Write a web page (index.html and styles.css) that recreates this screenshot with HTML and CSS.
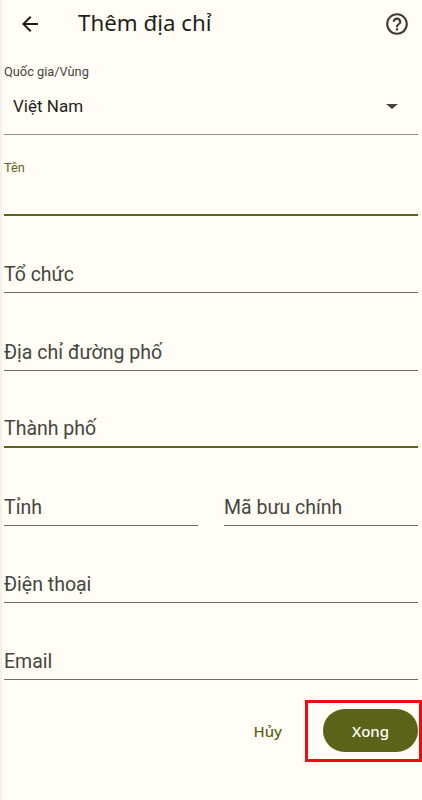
FILE: index.html
```html
<!DOCTYPE html>
<html lang="vi">
<head>
    <meta charset="utf-8" />
    <title>Thêm địa chỉ</title>
    <link rel="stylesheet" href="styles.css">
</head>
<body>
    <header class="top">
        <svg class="back" width="24" height="24" viewBox="0 0 24 24"><path d="M20 11H7.83l5.59-5.59L12 4l-8 8 8 8 1.41-1.41L7.83 13H20z" /></svg>
        <h1 class="title">Thêm địa chỉ</h1>
        <svg class="help" width="26" height="26" viewBox="0 0 24 24"><path d="M11 18h2v-2h-2v2zm1-16C6.48 2 2 6.48 2 12s4.48 10 10 10 10-4.48 10-10S17.52 2 12 2zm0 18c-4.41 0-8-3.59-8-8s3.59-8 8-8 8 3.59 8 8-3.59 8-8 8zm0-14c-2.21 0-4 1.79-4 4h2c0-1.1.9-2 2-2s2 .9 2 2c0 2-3 1.75-3 5h2c0-2.25 3-2.5 3-5 0-2.21-1.79-4-4-4z" /></svg>
    </header>
    <form class="form" action="#" method="get">
        <div class="country">
            <span class="small">Quốc gia/Vùng</span>
            <div class="select">
                <span>Việt Nam</span>
                <span class="caret"></span>
            </div>
        </div>
        <div class="field field-name active">
            <span class="small green">Tên</span>
        </div>
        <div class="field"><span class="ph">Tổ chức</span></div>
        <div class="field"><span class="ph">Địa chỉ đường phố</span></div>
        <div class="field active"><span class="ph">Thành phố</span></div>
        <div class="pair">
            <div class="field"><span class="ph">Tỉnh</span></div>
            <div class="field"><span class="ph">Mã bưu chính</span></div>
        </div>
        <div class="field"><span class="ph">Điện thoại</span></div>
        <div class="field"><span class="ph">Email</span></div>
        <div class="actions">
            <span class="cancel">Hủy</span>
            <span class="mark"><span class="done">Xong</span></span>
        </div>
    </form>
</body>
</html>
```

FILE: styles.css
```css
* {
    box-sizing: border-box;
    font-family: Roboto, "Noto Sans", sans-serif;
}

body {
    margin: 0;
    height: 800px;
    overflow: hidden;
    background: #fffdf6;
    box-shadow: inset 2px 0 #f1f0ea;
    color: #1f1f1a;
}

.top {
    display: flex;
    align-items: center;
    height: 48px;
    padding: 0 12px 0 18px;
}

.back {
    fill: #1c1c18;
}

.title {
    flex: 1;
    margin: 0 0 3px 36px;
    font-family: "Noto Sans", Roboto, sans-serif;
    font-size: 22.3px;
    font-weight: 400;
}

.help {
    fill: #3a3a36;
}

.form {
    padding: 0 4px;
}

.small {
    display: block;
    font-size: 12.8px;
    line-height: 16px;
    color: #45453f;
}

.green {
    color: #5a6318;
}

.country {
    height: 87px;
    padding-top: 16px;
    border-bottom: 1px solid #8c8c88;
}

.select {
    display: flex;
    align-items: center;
    justify-content: space-between;
    height: 24px;
    margin-top: 14px;
    padding: 0 20px 0 9px;
    font-size: 17px;
}

.caret {
    border: 6px solid transparent;
    border-top: 5px solid #45453f;
    border-bottom-width: 0;
}

.field {
    display: flex;
    align-items: flex-end;
    height: 77.4px;
    padding-bottom: 5px;
    border-bottom: 1px solid #6c6c64;
}

.field-name {
    display: block;
    height: 81px;
    padding-top: 25px;
}

.active {
    border-bottom: 2px solid #5a6318;
}

.ph {
    font-size: 19.5px;
    line-height: 24px;
    color: #45453f;
}

.pair {
    display: grid;
    grid-template-columns: 194px 194px;
    gap: 26px;
}

.actions {
    display: flex;
    align-items: center;
    justify-content: flex-end;
    margin-top: 20px;
    margin-right: -4px;
}

.cancel {
    margin-right: 23px;
    font-family: "Noto Sans", Roboto, sans-serif;
    font-size: 15px;
    font-weight: 500;
    color: #5a6318;
}

.mark {
    display: block;
    width: 117px;
    height: 62px;
    padding: 6px 1px 0 15px;
    border: 3px solid #f00a12;
}

.done {
    display: flex;
    align-items: center;
    justify-content: center;
    width: 95px;
    height: 43px;
    border-radius: 22px;
    background: #5a6318;
    color: #fff;
    font-family: "Noto Sans", Roboto, sans-serif;
    font-size: 15px;
    font-weight: 500;
}
```
